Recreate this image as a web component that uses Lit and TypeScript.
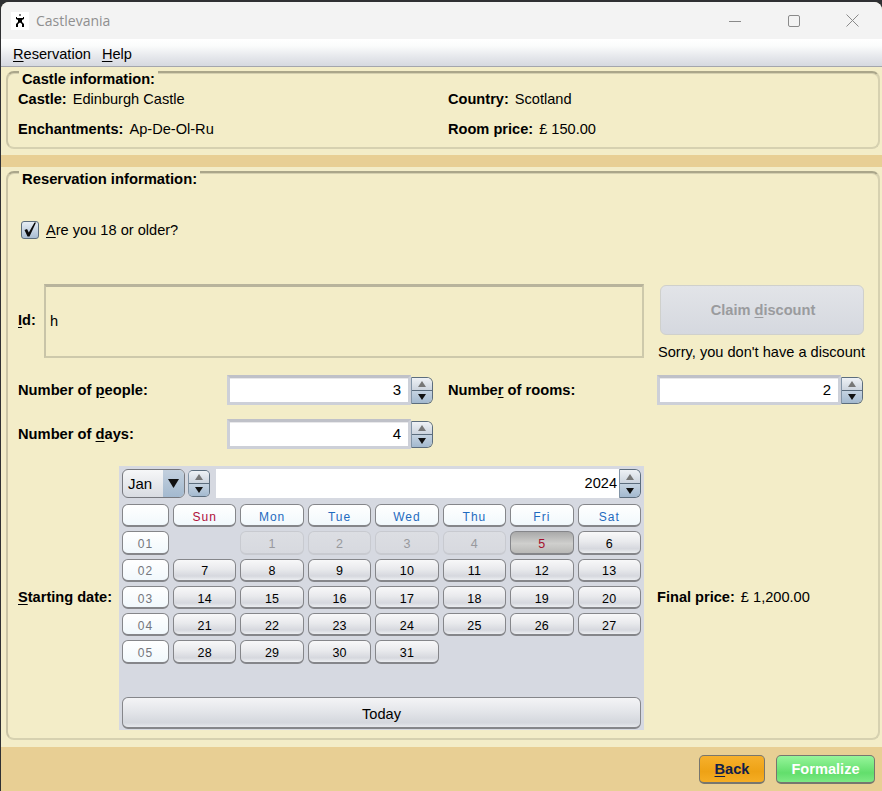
import {html, css, LitElement} from 'lit';
import {customElement} from 'lit/decorators.js';
import {classMap} from 'lit/directives/class-map.js';

const spin = html`
  <div class="spin">
    <div class="spin-up"><svg width="8" height="6" viewBox="0 0 8 6"><path d="M4 0 8 6H0z" fill="#777"/></svg></div>
    <div class="spin-down"><svg width="8" height="6" viewBox="0 0 8 6"><path d="M0 0H8L4 6z" fill="#111"/></svg></div>
  </div>`;

@customElement('app-root')
export class AppRoot extends LitElement {
  static styles = css`
    :host {
      display: block;
      width: 882px;
      height: 791px;
      overflow: hidden;
      background: #2f3033;
      font-family: "Liberation Sans", Arial, sans-serif;
      font-size: 14.6px;
      color: #000;
    }
    * { box-sizing: border-box; }
    u { text-underline-offset: 2px; }

    .window {
      margin: 2px 0 0 1px;
      width: 881px;
      height: 789px;
      display: flex;
      flex-direction: column;
      border-radius: 8px 8px 0 0;
      overflow: hidden;
      background: #f3edc8;
    }

    .titlebar {
      height: 37px;
      flex: none;
      display: flex;
      align-items: center;
      background: #f3f3f3;
      padding-left: 10px;
    }
    .app-icon {
      width: 18px;
      height: 18px;
      background: #fff;
      display: flex;
      align-items: center;
      justify-content: center;
      margin-right: 7px;
    }
    .title {
      font-family: "Open Sans", sans-serif;
      font-size: 14px;
      color: #8f8f8f;
      flex: 1;
    }
    .win-btn {
      width: 59px;
      display: flex;
      justify-content: center;
      align-items: center;
    }

    .menubar {
      height: 28px;
      flex: none;
      display: flex;
      align-items: center;
      gap: 11px;
      padding: 3px 0 0 12px;
      background: linear-gradient(#ffffff 0%, #fbfcfc 25%, #e6e8ec 65%, #d6d9e0 100%);
      border-bottom: 1px solid #a4a6ad;
    }

    .top-area {
      flex: none;
      height: 88px;
      padding: 4px 2px 0 5px;
    }
    .top-area .panel { height: 78px; }
    .band {
      flex: none;
      height: 12px;
      background: #e8cf94;
    }
    .bottom-area {
      flex: 1;
      padding: 4px 2px 7px 5px;
      min-height: 0;
    }
    .panel {
      height: 100%;
      border: 2px solid #d6d1b0;
      border-top-color: #aaa68a;
      border-left-color: #c9c4a5;
      border-radius: 8px;
      padding: 0 10px;
      box-shadow: inset 0 1px 0 #d5d0b0;
    }
    .legend {
      width: fit-content;
      margin: -2px 0 0 1px;
      padding: 0 3px 0 3px;
      height: 15px;
      line-height: 16px;
      background: #f3edc8;
      font-weight: bold;
    }
    .bottom-area .legend { font-size: 14.8px; }
    b { font-weight: bold; }

    .castle-grid {
      display: grid;
      grid-template-columns: 430px 1fr;
      grid-auto-rows: 30px;
      padding-top: 1px;
    }
    .castle-grid div {
      display: flex;
      gap: 6px;
      align-items: center;
      height: 24px;
    }

    .check-row {
      display: flex;
      align-items: center;
      gap: 7px;
      margin: 35px 0 0 3px;
      height: 18px;
    }
    .check {
      width: 18px;
      height: 18px;
      border: 1px solid #5c6d7d;
      border-radius: 3px;
      background: linear-gradient(#e6edf4, #a9bdd2);
    }
    .check svg { display: block; margin: -1px; }

    .id-row {
      display: grid;
      grid-template-columns: 26px 600px 1fr;
      margin-top: 45px;
      height: 91px;
    }
    .id-label {
      height: 74px;
      display: flex;
      align-items: center;
      padding-bottom: 2px;
      font-weight: bold;
    }
    .id-field {
      height: 74px;
      border: 2px solid #cdc9ab;
      border-top: 3px solid #b8b49c;
      border-left-color: #c8c4a8;
      display: flex;
      align-items: center;
      padding: 0 4px 2px;
    }
    .claim-col {
      padding-left: 14px;
      display: flex;
      flex-direction: column;
      white-space: nowrap;
    }
    .claim {
      margin: 1px 0 0 2px;
      width: 204px;
      height: 50px;
      flex: none;
      border: 1px solid #cfd0cc;
      border-radius: 6px;
      background: linear-gradient(#e2e4e8, #d5d8df);
      color: #9a9b9e;
      font-weight: bold;
      padding-left: 2px;
      display: flex;
      align-items: center;
      justify-content: center;
    }
    .sorry { margin-top: 9px; line-height: 16px; }

    .num-grid {
      display: grid;
      grid-template-columns: 209px 206px 15px 209px 206px;
      grid-auto-rows: 44px;
    }
    .num-label {
      height: 30px;
      display: flex;
      align-items: center;
      font-weight: bold;
      font-size: 14.7px;
      white-space: pre;
    }
    .spinner {
      display: flex;
      align-items: center;
      height: 30px;
    }
    .num-input {
      width: 184px;
      height: 30px;
      border: 3px solid #cdd0d8;
      border-top-color: #bfc1c8;
      background: #fff;
      box-shadow: inset 0 1px 0 #e8e8ea;
      text-align: right;
      padding-right: 7px;
      line-height: 24px;
      font-size: 15px;
    }
    .spin {
      width: 22px;
      height: 27px;
      flex: none;
      display: flex;
      flex-direction: column;
      border: 1px solid #5c6d7d;
      border-left-color: #8294a6;
      border-radius: 0 6px 6px 0;
      overflow: hidden;
    }
    .spin-up, .spin-down {
      flex: 1;
      display: flex;
      align-items: center;
      justify-content: center;
    }
    .spin-up { background: linear-gradient(#eef1f5, #ccd4de); border-bottom: 1px solid #5c6d7d; }
    .spin-down { background: linear-gradient(#c5d3e1, #a3b9cf); }

    .date-row {
      display: flex;
      margin-top: 3px;
    }
    .date-label {
      width: 101px;
      font-weight: bold;
      align-self: center;
      padding-bottom: 2px;
    }
    .calendar {
      width: 525px;
      height: 264px;
      background: #d6d9e1;
      padding: 3px 3px 1px;
      display: flex;
      flex-direction: column;
    }
    .cal-head {
      display: flex;
      align-items: center;
      height: 29px;
      flex: none;
    }
    .combo {
      width: 63px;
      height: 29px;
      display: flex;
      border: 1px solid #77797f;
      border-radius: 6px;
      overflow: hidden;
      background: linear-gradient(#f6f7f8, #d9dce2);
      font-size: 15px;
    }
    .combo-text { flex: 1; padding-left: 5px; line-height: 27px; }
    .combo-arrow {
      width: 21px;
      background: linear-gradient(#c3d0de, #a3b9cf);
      display: flex;
      align-items: center;
      justify-content: center;
    }
    .head-spin { margin-left: 3px; border-radius: 5px; }
    .year {
      flex: 1;
      height: 29px;
      margin-left: 6px;
      background: #fff;
      text-align: right;
      padding-right: 2px;
      line-height: 29px;
    }
    .year-spin { border-radius: 0 6px 6px 0; height: 29px; }

    .days {
      display: grid;
      grid-template-columns: 47px repeat(7, 1fr);
      grid-auto-rows: 23.3px;
      gap: 4px;
      margin-top: 6px;
      flex: none;
    }
    .day {
      border: 1px solid #85868a;
      border-bottom-width: 2px;
      border-radius: 6px;
      background: linear-gradient(#f8f8f9 0%, #e9eaed 45%, #d6d8de 80%, #eceef1 100%);
      font-size: 12.5px;
      letter-spacing: 0.2px;
      padding-top: 3px;
      display: flex;
      align-items: center;
      justify-content: center;
    }
    .head {
      background: linear-gradient(#ffffff, #f1f8fc);
      color: #1f6bbf;
      letter-spacing: 1px;
      font-size: 12px;
    }
    .head.sun { color: #b0103a; }
    .week {
      background: linear-gradient(#ffffff, #f1f8fc);
      color: #74767c;
      letter-spacing: 1.2px;
      font-size: 12px;
    }
    .off {
      border: 1px solid #c8cad0;
      border-bottom-width: 2px;
      background: linear-gradient(#dcdee3, #d7d9df);
      color: #98999d;
    }
    .selected {
      background: linear-gradient(#a9a9a9, #cfcfcd 55%, #b9b9b7);
      color: #a4102e;
    }
    .blank { visibility: hidden; }
    .today {
      margin-top: auto;
      height: 32px;
      flex: none;
      border: 1px solid #85868a;
      border-bottom-width: 2px;
      border-radius: 6px;
      background: linear-gradient(#f4f4f6, #e4e6ea 45%, #d4d7dd 85%, #e6e8ec);
      padding-top: 2px;
      display: flex;
      align-items: center;
      justify-content: center;
    }
    .final {
      margin-left: 13px;
      align-self: center;
      padding-bottom: 2px;
      display: flex;
      gap: 6px;
      white-space: nowrap;
    }

    .footer {
      height: 44px;
      flex: none;
      background: #e8cf94;
      display: flex;
      justify-content: flex-end;
      align-items: center;
      gap: 11px;
      padding: 0 7px 0 0;
    }
    .btn {
      height: 29px;
      border: 1px solid #77766e;
      border-bottom-width: 2px;
      border-radius: 5px;
      font-weight: bold;
      display: flex;
      align-items: center;
      justify-content: center;
    }
    .back {
      width: 66px;
      background: linear-gradient(#f6b02c, #eea215 60%, #f5ad24);
      color: #10204a;
    }
    .formalize {
      width: 99px;
      background: linear-gradient(#96f59a, #62de6c 65%, #7de984);
      color: #fff;
    }
  `;

  renderDay(label: string, cls: Record<string, boolean> = {}) {
    return html`<div class=${classMap({day: true, ...cls})}>${label}</div>`;
  }

  renderCalendar() {
    const names = ['Sun', 'Mon', 'Tue', 'Wed', 'Thu', 'Fri', 'Sat'];
    const cells = [this.renderDay('', {head: true})];
    names.forEach((n, i) => cells.push(this.renderDay(n, {head: true, sun: i === 0})));

    // january 2024 starts on a monday, the days before the 6th are disabled
    let d = 1;
    for (let w = 1; w <= 5; w++) {
      cells.push(this.renderDay('0' + w, {week: true}));
      for (let c = 0; c < 7; c++) {
        const empty = (w === 1 && c === 0) || d > 31;
        if (empty) {
          cells.push(this.renderDay('', {blank: true}));
          continue;
        }
        cells.push(this.renderDay(String(d), {off: d < 5, selected: d === 5}));
        d++;
      }
    }
    return cells;
  }

  render() {
    return html`
      <div class="window">
        <div class="titlebar">
          <div class="app-icon">
            <svg width="10" height="13" viewBox="0 0 10 13">
              <path d="M4.5 0h1v2h-1zM1 3h1v1h6V3h1v2L7 6v2l2 2v3H7v-3L5 8.5 3 10v3H1v-3l2-2V6L1 5z" fill="#000"/>
            </svg>
          </div>
          <div class="title">Castlevania</div>
          <div class="win-btn"><svg width="12" height="12"><path d="M0 6.5H12" stroke="#8a8a8a"/></svg></div>
          <div class="win-btn"><svg width="12" height="12"><rect x=".5" y=".5" width="11" height="11" rx="1.5" fill="none" stroke="#8a8a8a"/></svg></div>
          <div class="win-btn"><svg width="13" height="13"><path d="M.5.5l12 12M12.5.5l-12 12" stroke="#8a8a8a"/></svg></div>
        </div>
        <div class="menubar">
          <span><u>R</u>eservation</span>
          <span><u>H</u>elp</span>
        </div>
        <div class="top-area">
          <div class="panel">
            <div class="legend">Castle information:</div>
            <div class="castle-grid">
              <div><b>Castle:</b> Edinburgh Castle</div>
              <div><b>Country:</b> Scotland</div>
              <div><b>Enchantments:</b> Ap-De-Ol-Ru</div>
              <div><b>Room price:</b> £ 150.00</div>
            </div>
          </div>
        </div>
        <div class="band"></div>
        <div class="bottom-area">
          <div class="panel">
            <div class="legend">Reservation information:</div>
            <div class="check-row">
              <div class="check">
                <svg width="18" height="18" viewBox="0 0 18 18"><path d="M3.5 9 6 8l1.8 3.5L13.5 1.5H15L8.5 15.5h-2z" fill="#0b0b0b"/></svg>
              </div>
              <span><u>A</u>re you 18 or older?</span>
            </div>
            <div class="id-row">
              <div class="id-label"><span><u>I</u>d:</span></div>
              <div class="id-field">h</div>
              <div class="claim-col">
                <div class="claim"><span>Claim <u>d</u>iscount</span></div>
                <div class="sorry">Sorry, you don't have a discount</div>
              </div>
            </div>
            <div class="num-grid">
              <div class="num-label"><span>Number of <u>p</u>eople:</span></div>
              <div class="spinner"><div class="num-input">3</div>${spin}</div>
              <div></div>
              <div class="num-label"><span>Numbe<u>r</u> of rooms:</span></div>
              <div class="spinner"><div class="num-input">2</div>${spin}</div>
              <div class="num-label"><span>Number of <u>d</u>ays:</span></div>
              <div class="spinner"><div class="num-input">4</div>${spin}</div>
            </div>
            <div class="date-row">
              <div class="date-label"><u>S</u>tarting date:</div>
              <div class="calendar">
                <div class="cal-head">
                  <div class="combo">
                    <div class="combo-text">Jan</div>
                    <div class="combo-arrow"><svg width="11" height="9" viewBox="0 0 11 9"><path d="M0 0H11L5.5 9z" fill="#111"/></svg></div>
                  </div>
                  <div class="spin head-spin">
                    <div class="spin-up"><svg width="8" height="6" viewBox="0 0 8 6"><path d="M4 0 8 6H0z" fill="#777"/></svg></div>
                    <div class="spin-down"><svg width="8" height="6" viewBox="0 0 8 6"><path d="M0 0H8L4 6z" fill="#111"/></svg></div>
                  </div>
                  <div class="year">2024</div>
                  <div class="spin year-spin">
                    <div class="spin-up"><svg width="8" height="6" viewBox="0 0 8 6"><path d="M4 0 8 6H0z" fill="#777"/></svg></div>
                    <div class="spin-down"><svg width="8" height="6" viewBox="0 0 8 6"><path d="M0 0H8L4 6z" fill="#111"/></svg></div>
                  </div>
                </div>
                <div class="days">${this.renderCalendar()}</div>
                <div class="today">Today</div>
              </div>
              <div class="final"><b>Final price:</b> £ 1,200.00</div>
            </div>
          </div>
        </div>
        <div class="footer">
          <div class="btn back"><span><u>B</u>ack</span></div>
          <div class="btn formalize">Formalize</div>
        </div>
      </div>
    `;
  }
}

declare global {
  interface HTMLElementTagNameMap {
    'app-root': AppRoot
  }
}
